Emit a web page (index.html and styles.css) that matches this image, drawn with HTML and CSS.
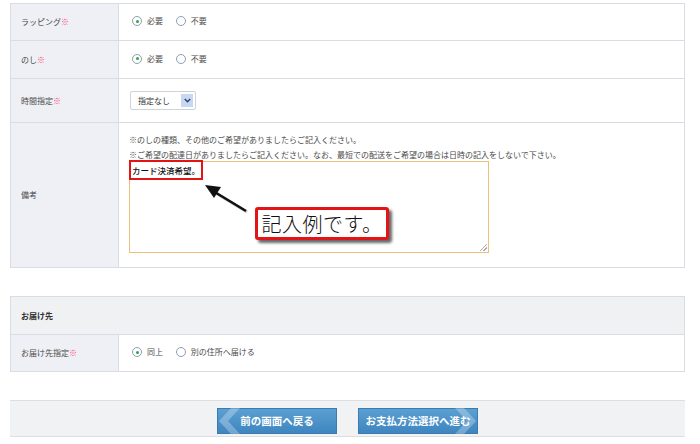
FILE: index.html
```html
<!doctype html>
<html lang="ja">
<head>
<meta charset="utf-8">
<title>ご注文手続き</title>
<link rel="stylesheet" href="styles.css">
</head>
<body>
<div id="container">

    <!-- Options -->
    <table class="form">
        <tr class="row-a">
            <th>ラッピング<span class="req">※</span></th>
            <td>
                <label class="radio"><i class="on"></i>必要</label>
                <label class="radio"><i></i>不要</label>
            </td>
        </tr>
        <tr class="row-b">
            <th>のし<span class="req">※</span></th>
            <td>
                <label class="radio"><i class="on"></i>必要</label>
                <label class="radio"><i></i>不要</label>
            </td>
        </tr>
        <tr class="row-c">
            <th>時間指定<span class="req">※</span></th>
            <td>
                <span class="select">指定なし<b class="drop"><svg width="7" height="5" viewBox="0 0 7 5"><path d="M0.8 1 L3.5 3.8 L6.2 1" fill="none" stroke="#2b3f6a" stroke-width="1.4"/></svg></b></span>
            </td>
        </tr>
        <tr class="row-memo">
            <th>備考</th>
            <td>
                <p class="note">※のしの種類、その他のご希望がありましたらご記入ください。</p>
                <p class="note">※ご希望の配達日がありましたらご記入ください。なお、最短での配送をご希望の場合は日時の記入をしないで下さい。</p>
                <div class="memo">
                    <span class="sample">カード決済希望。</span>
                    <svg class="pointer" width="130" height="60" viewBox="0 0 130 60">
                        <line x1="117" y1="50" x2="84" y2="30" stroke="#999" stroke-width="3" opacity="0.5"/>
                        <line x1="116" y1="49" x2="83" y2="29" stroke="#111" stroke-width="2.6"/>
                        <polygon points="75,23 91,25 84,36" fill="#111"/>
                    </svg>
                    <div class="callout">記入例です。</div>
                    <span class="grip"></span>
                </div>
            </td>
        </tr>
    </table>

    <!-- Delivery -->
    <table class="form ship">
        <tr class="head">
            <th colspan="2">お届け先</th>
        </tr>
        <tr class="row-a">
            <th>お届け先指定<span class="req">※</span></th>
            <td>
                <label class="radio"><i class="on"></i>同上</label>
                <label class="radio"><i></i>別の住所へ届ける</label>
            </td>
        </tr>
    </table>

    <!-- Buttons -->
    <div class="actions">
        <a class="button back" href="#">
            <svg class="chev" width="24" height="26" viewBox="0 0 24 26"><path d="M22 0 L13 0 L1 13 L13 26 L22 26 L10 13 Z" fill="#ffffff" opacity="0.28"/></svg>
            前の画面へ戻る
        </a>
        <a class="button next" href="#">
            お支払方法選択へ進む
            <svg class="chev" width="24" height="26" viewBox="0 0 24 26"><path d="M2 0 L11 0 L23 13 L11 26 L2 26 L14 13 Z" fill="#ffffff" opacity="0.28"/></svg>
        </a>
    </div>

</div>
</body>
</html>
```

FILE: styles.css
```css
/*Simple reset*/
* {
    margin: 0;
    padding: 0;
    box-sizing: border-box;
}
body {
    font-family: "Noto Sans CJK JP", "Noto Sans", sans-serif;
    font-size: 8px;
    line-height: 1.5;
    color: #4a4a4a;
    background: #fff;
}
#container {
    width: 685px;
    padding: 3px 0 0 10px;
}

/* tables */
.form {
    width: 100%;
    border-collapse: collapse;
    border: 1px solid #d9dce2;
}
.form th, .form td {
    border: 1px solid #d9dce2;
    vertical-align: middle;
}
.form th {
    width: 108px;
    padding-left: 10px;
    background: #eef0f5;
    text-align: left;
    font-weight: normal;
}
.form td {
    padding-left: 13px;
}
.row-a th, .row-a td { height: 37px; }
.row-b th, .row-b td { height: 38px; }
.row-c th, .row-c td { height: 44px; }
.row-memo td {
    height: 145px;
    padding: 9px 0 12px 10px;
    vertical-align: top;
}
.req {
    color: #ff3f70;
}

/* radios */
.radio {
    display: inline-flex;
    align-items: center;
    gap: 5px;
    margin-right: 11px;
}
.radio i {
    position: relative;
    width: 10px;
    height: 10px;
    border: 1px solid #8e9db3;
    border-radius: 50%;
    background: #fff;
}
.radio i.on::after {
    content: '';
    position: absolute;
    left: 2.5px;
    top: 2.5px;
    width: 3px;
    height: 3px;
    border-radius: 50%;
    background: #28a83c;
}

/* select */
.select {
    display: inline-flex;
    align-items: center;
    justify-content: space-between;
    width: 66px;
    height: 19px;
    margin-left: -2px;
    padding: 0 2px 0 7px;
    border: 1px solid #cfd3d9;
    border-radius: 2px;
    background: #fff;
    color: #333;
}
.drop {
    display: flex;
    align-items: center;
    justify-content: center;
    width: 12px;
    height: 13px;
    background: #c8d8f2;
}

/* memo */
.note {
    line-height: 15px;
    white-space: nowrap;
}
.memo {
    position: relative;
    width: 360px;
    height: 92px;
    margin-top: -1px;
    border: 1px solid #ecbf7c;
    background: #fff;
}
.sample {
    display: inline-block;
    margin: -2px 0 0 -1px;
    padding: 1px 1px;
    border: 2px solid #e41414;
    font-size: 8.5px;
    font-weight: 500;
    line-height: 14px;
    color: #111;
}
.pointer {
    position: absolute;
    left: 0;
    top: 0;
}
.callout {
    position: absolute;
    left: 125px;
    top: 45px;
    width: 134px;
    height: 33px;
    border: 3px solid #e41414;
    border-radius: 3px;
    background: #fff;
    box-shadow: 3px 3px 3px rgba(0,0,0,0.6);
    font-size: 20px;
    font-weight: 300;
    line-height: 27px;
    letter-spacing: 0.5px;
    text-align: center;
    color: #111;
}
.grip {
    position: absolute;
    right: 1px;
    bottom: 1px;
    width: 7px;
    height: 7px;
    background: linear-gradient(135deg, transparent 45%, #aaa 45%, #aaa 55%, transparent 55%, transparent 70%, #aaa 70%, #aaa 80%, transparent 80%);
}

/* delivery */
.ship {
    margin-top: 28px;
}
.ship .head th {
    height: 38px;
    background: #f0f1f3;
    font-weight: bold;
    color: #333;
}

/* buttons */
.actions {
    display: flex;
    justify-content: center;
    gap: 21px;
    margin-top: 28px;
    padding: 7px 0 2px;
    background: #f1f2f4;
    border-top: 1px solid #dcdee2;
    border-bottom: 1px solid #dcdee2;
}
.button {
    position: relative;
    display: flex;
    align-items: center;
    justify-content: center;
    width: 120px;
    height: 26px;
    border: 1px solid #3b7bb0;
    background: linear-gradient(#5ba0d2, #3f85bf);
    color: #fff;
    font-size: 10.5px;
    font-weight: bold;
    text-decoration: none;
}
.button .chev {
    position: absolute;
    top: -1px;
}
.back .chev { left: 0; }
.next .chev { right: 0; }
```
